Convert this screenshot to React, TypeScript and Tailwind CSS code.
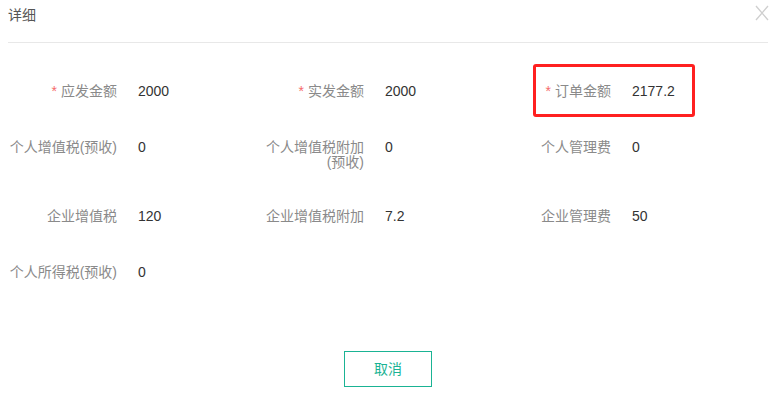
type Field = { label: string; value: string; required?: boolean };

const rows: { h: string; fields: Field[] }[] = [
  {
    h: "h-[56px]",
    fields: [
      { label: "应发金额", value: "2000", required: true },
      { label: "实发金额", value: "2000", required: true },
      { label: "订单金额", value: "2177.2", required: true },
    ],
  },
  {
    h: "h-[69px]",
    fields: [
      { label: "个人增值税(预收)", value: "0" },
      { label: "个人增值税附加\n(预收)", value: "0" },
      { label: "个人管理费", value: "0" },
    ],
  },
  {
    h: "h-[56px]",
    fields: [
      { label: "企业增值税", value: "120" },
      { label: "企业增值税附加", value: "7.2" },
      { label: "企业管理费", value: "50" },
    ],
  },
  {
    h: "h-[56px]",
    fields: [{ label: "个人所得税(预收)", value: "0" }],
  },
];

function FieldItem({ field }: { field: Field }) {
  return (
    <div className="flex w-[247px] items-start">
      <div className="w-[117px] whitespace-pre-line text-right text-[#8a8a8a]">
        {field.required && <span className="mr-[4px] text-[#f56c6c]">*</span>}
        {field.label}
      </div>
      <div className="ml-[21px] text-[#333]">{field.value}</div>
    </div>
  );
}

export default function App() {
  return (
    <div
      className="relative h-[397px] w-[784px] overflow-hidden bg-white text-[14px] leading-[15px]"
      style={{ fontFamily: '"Liberation Sans", "Noto Sans CJK SC", sans-serif' }}
    >
      {/* Header */}
      <div className="ml-[8px] mr-[16px] flex h-[43px] items-start justify-between border-b border-[#e8e8e8] pt-[8px]">
        <span className="text-[14px] leading-[15px] text-[#555]">详细</span>
        <svg
          width="14"
          height="16"
          viewBox="0 0 14 16"
          className="-mt-[3px] mr-[-1px]"
          stroke="#cfcfcf"
          strokeWidth="1.3"
          fill="none"
        >
          <path d="M1 1 L13 15 M13 1 L1 15" />
        </svg>
      </div>

      {/* Detail grid */}
      <div className="pt-[41px]">
        {rows.map((row, i) => (
          <div key={i} className={`flex ${row.h}`}>
            {row.fields.map((f) => (
              <FieldItem key={f.label} field={f} />
            ))}
          </div>
        ))}
      </div>

      {/* Footer */}
      <div className="mt-[30px] flex justify-center">
        <button className="mr-[8px] h-[36px] w-[88px] border border-[#1ab394] bg-white text-[14px] text-[#1ab394]">
          取消
        </button>
      </div>

      {/* Annotation highlight */}
      <div className="absolute left-[533px] top-[64px] h-[53px] w-[162px] rounded-[3px] border-[3px] border-[#ff2020]" />
    </div>
  );
}
